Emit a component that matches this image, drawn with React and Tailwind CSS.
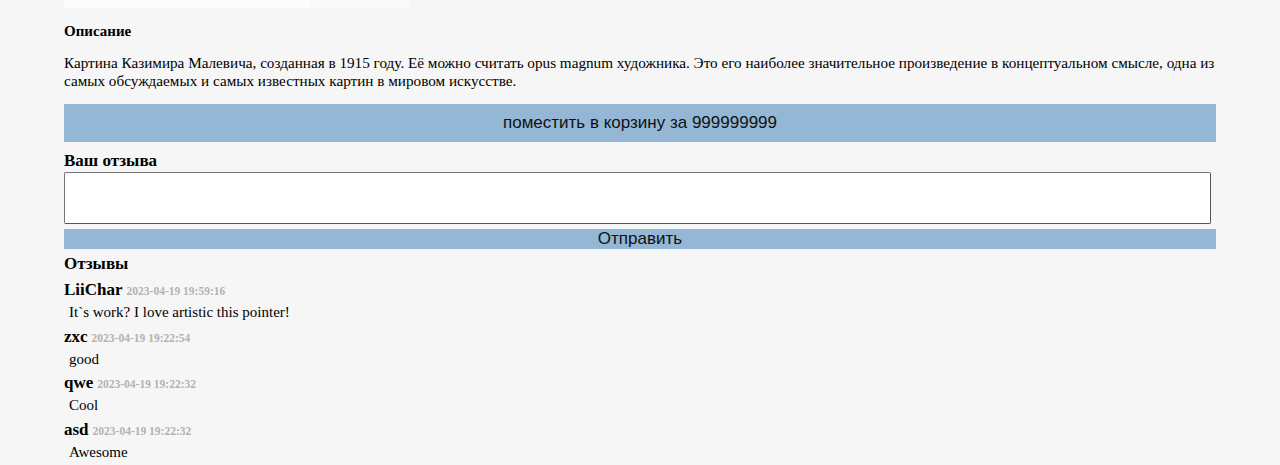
const reviews = [
  { name: 'LiiChar', date: '2023-04-19 19:59:16', text: 'It`s work? I love artistic this pointer!' },
  { name: 'zxc', date: '2023-04-19 19:22:54', text: 'good' },
  { name: 'qwe', date: '2023-04-19 19:22:32', text: 'Cool' },
  { name: 'asd', date: '2023-04-19 19:22:32', text: 'Awesome' },
];

const serif = "font-['Liberation_Serif','Times_New_Roman',serif]";
const sans = "font-['Liberation_Sans',Arial,sans-serif]";

export default function App() {
  return (
    <div className={`min-h-[465px] w-full overflow-hidden bg-[#f6f6f6] px-[64px] text-black ${serif}`}>
      {/* low edge of the picture above */}
      <div className="flex h-[9px]">
        <div className="h-[8px] w-[246px] bg-white/70" />
        <div className="h-[8px] w-[100px] bg-white/30" />
      </div>

      <h3 className="mt-[14px] text-[15px] font-bold leading-[16px]">Описание</h3>
      <p className="mt-[15px] text-[15.2px] leading-[18px]">
        Картина Казимира Малевича, созданная в 1915 году. Её можно считать opus magnum художника. Это его наиболее
        значительное произведение в концептуальном смысле, одна из самых обсуждаемых и самых известных картин в мировом
        искусстве.
      </p>

      <button
        type="button"
        className={`mt-[14px] flex h-[38px] w-full items-center justify-center bg-[#93b7d5] text-[17px] text-[#111] ${sans}`}
      >
        поместить в корзину за 999999999
      </button>

      <h4 className="mt-[9px] text-[17px] font-bold leading-[20px]">Ваш отзыва</h4>
      <textarea className="mt-[1px] block h-[52px] w-[1147px] resize-none rounded-[2px] border border-[#767676] border-b-[#555] border-r-[#555] bg-white outline-none" />
      <button
        type="button"
        className={`mt-[5px] flex h-[20px] w-full items-center justify-center bg-[#93b7d5] text-[17px] leading-[20px] text-[#111] ${sans}`}
      >
        Отправить
      </button>

      <h4 className="mt-[5px] text-[17px] font-bold leading-[20px]">Отзывы</h4>
      <div className="mt-[4px]">
        {reviews.map((r) => (
          <div key={r.name}>
            <div className="flex h-[23px] items-baseline gap-[4px] overflow-visible leading-[23px]">
              <span className="text-[17px] font-bold">{r.name}</span>
              <span className="text-[11.5px] font-bold text-[#b3b3b3]">{r.date}</span>
            </div>
            <p className="h-[23.67px] pl-[5px] text-[15px] leading-[23.67px]">{r.text}</p>
          </div>
        ))}
      </div>
    </div>
  );
}
